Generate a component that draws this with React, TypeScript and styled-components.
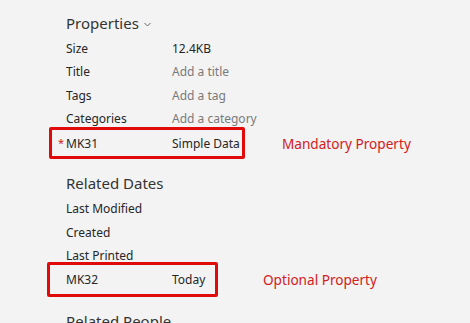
import React from "react"
import styled, { createGlobalStyle } from "styled-components"

const Global = createGlobalStyle`
  html, body {
    margin: 0;
    padding: 0;
    background: #f3f3f3;
    overflow: hidden;
  }
  body {
    font-family: "Noto Sans", "Open Sans", sans-serif;
    color: #262626;
  }
`

const Pane = styled.div`
  width: 470px;
  height: 323px;
  padding: 9px 0 0 66px;
  box-sizing: border-box;
  overflow: hidden;
`

const Heading = styled.div<{ $gap?: number }>`
  height: 28px;
  margin-top: ${(p) => p.$gap ?? 0}px;
  display: flex;
  align-items: center;
  gap: 5px;
  font-size: 15px;
  color: #333;
  white-space: nowrap;
`

const Chevron = styled.svg`
  width: 7px;
  height: 5px;
  margin-top: 2px;
`

const Row = styled.div`
  display: grid;
  grid-template-columns: 106px auto;
  height: 23.33px;
  align-items: center;
  font-size: 12px;
  white-space: nowrap;
`

const Value = styled.span<{ $muted?: boolean }>`
  color: ${(p) => (p.$muted ? "#7a7a7a" : "#262626")};
`

const Callout = styled.div<{ $top: number }>`
  display: flex;
  align-items: center;
  margin-top: ${(p) => p.$top}px;
  margin-left: -17px;
`

const Frame = styled.div<{ $w: number; $h: number; $shift?: number }>`
  width: ${(p) => p.$w}px;
  height: ${(p) => p.$h}px;
  margin-left: ${(p) => p.$shift ?? 0}px;
  box-sizing: border-box;
  border: 3px solid #e00a0a;
  border-radius: 2px;
  padding-left: ${(p) => 14 - (p.$shift ?? 0)}px;
  display: flex;
  align-items: center;
`

const FrameRow = styled(Row)`
  position: relative;
`

const Star = styled.span`
  position: absolute;
  left: -8px;
  top: 3px;
  color: #d02020;
  font-size: 11px;
`

const Note = styled.span<{ $gap: number }>`
  margin-left: ${(p) => p.$gap}px;
  color: #d42020;
  font-size: 13.6px;
  white-space: nowrap;
`

const App: React.FC = () => (
  <>
    <Global />
    <Pane>
      <Heading>
        Properties
        <Chevron viewBox="0 0 7 5">
          <path d="M0.5 1 L3.5 4 L6.5 1" fill="none" stroke="#666" strokeWidth="1" />
        </Chevron>
      </Heading>
      <Row>
        <span>Size</span>
        <Value>12.4KB</Value>
      </Row>
      <Row>
        <span>Title</span>
        <Value $muted>Add a title</Value>
      </Row>
      <Row>
        <span>Tags</span>
        <Value $muted>Add a tag</Value>
      </Row>
      <Row>
        <span>Categories</span>
        <Value $muted>Add a category</Value>
      </Row>

      <Callout $top={-3}>
        <Frame $w={196} $h={32}>
          <FrameRow>
            <Star>*</Star>
            <span>MK31</span>
            <Value>Simple Data</Value>
          </FrameRow>
        </Frame>
        <Note $gap={37}>Mandatory Property</Note>
      </Callout>

      <Heading $gap={10}>Related Dates</Heading>
      <Row>
        <span>Last Modified</span>
      </Row>
      <Row>
        <span>Created</span>
      </Row>
      <Row>
        <span>Last Printed</span>
      </Row>

      <Callout $top={-5}>
        <Frame $w={171} $h={35} $shift={-2}>
          <Row>
            <span>MK32</span>
            <Value>Today</Value>
          </Row>
        </Frame>
        <Note $gap={45}>Optional Property</Note>
      </Callout>

      <Heading $gap={10}>Related People</Heading>
    </Pane>
  </>
)

export default App
